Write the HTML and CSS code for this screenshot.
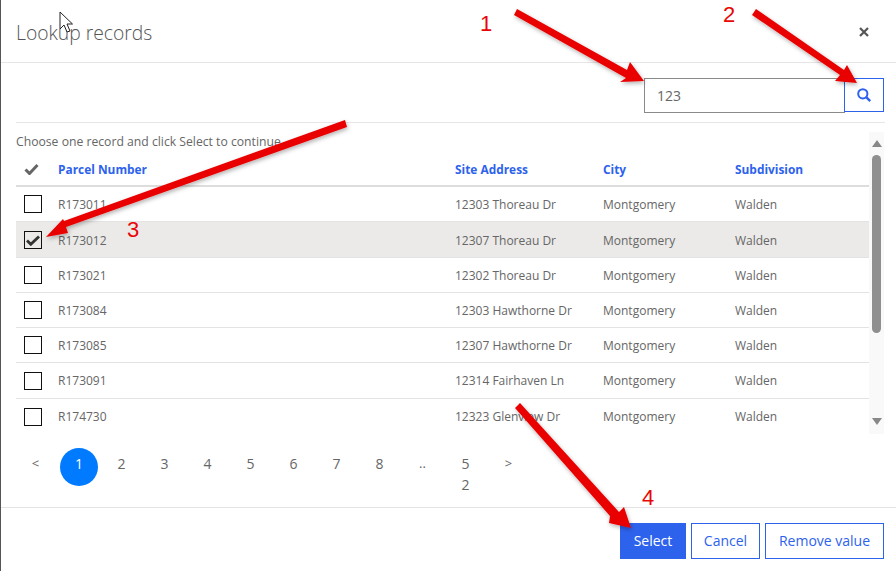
FILE: index.html
```html
<!DOCTYPE html>
<html lang="en">
<head>
<meta charset="utf-8">
<title>Lookup records</title>
<link rel="stylesheet" href="styles.css">
</head>
<body>
<div class="dialog">
  <header class="head">
    <h1 class="title">Lookup records</h1>
    <button class="close" aria-label="Close">
      <svg width="12" height="12" viewBox="0 0 12 12"><path d="M2 2l8 8M10 2l-8 8" stroke="#555" stroke-width="2.2" fill="none"/></svg>
    </button>
  </header>
  <div class="searchrow">
    <div class="searchbox">123</div>
    <button class="searchbtn" aria-label="Search">
      <svg width="16" height="16" viewBox="0 0 16 16"><circle cx="6.8" cy="6.8" r="4.6" stroke="#2d62ed" stroke-width="2" fill="none"/><path d="M10.2 10.2l4 4" stroke="#2d62ed" stroke-width="2.4" fill="none"/></svg>
    </button>
  </div>
  <div class="body">
    <div class="listwrap">
      <p class="hint">Choose one record and click Select to continue</p>
      <div class="row rowhead">
        <div class="c0"><svg width="15" height="12" viewBox="0 0 15 12"><path d="M1.500 6.500l4 4L13.500 2" stroke="#666" stroke-width="3" fill="none"/></svg></div>
        <div class="c1">Parcel Number</div><div class="c2">Site Address</div><div class="c3">City</div><div class="c4">Subdivision</div>
      </div>
      <div class="row"><div class="c0"><span class="box"></span></div><div class="c1">R173011</div><div class="c2">12303 Thoreau Dr</div><div class="c3">Montgomery</div><div class="c4">Walden</div></div>
      <div class="row tall sel"><div class="c0"><span class="box"><svg width="14" height="11" viewBox="0 0 14 11"><path d="M1 5.500l3.800 3.800L13 1.500" stroke="#333" stroke-width="2.800" fill="none"/></svg></span></div><div class="c1">R173012</div><div class="c2">12307 Thoreau Dr</div><div class="c3">Montgomery</div><div class="c4">Walden</div></div>
      <div class="row"><div class="c0"><span class="box"></span></div><div class="c1">R173021</div><div class="c2">12302 Thoreau Dr</div><div class="c3">Montgomery</div><div class="c4">Walden</div></div>
      <div class="row"><div class="c0"><span class="box"></span></div><div class="c1">R173084</div><div class="c2">12303 Hawthorne Dr</div><div class="c3">Montgomery</div><div class="c4">Walden</div></div>
      <div class="row"><div class="c0"><span class="box"></span></div><div class="c1">R173085</div><div class="c2">12307 Hawthorne Dr</div><div class="c3">Montgomery</div><div class="c4">Walden</div></div>
      <div class="row tall"><div class="c0"><span class="box"></span></div><div class="c1">R173091</div><div class="c2">12314 Fairhaven Ln</div><div class="c3">Montgomery</div><div class="c4">Walden</div></div>
      <div class="row last"><div class="c0"><span class="box"></span></div><div class="c1">R174730</div><div class="c2">12323 Glenview Dr</div><div class="c3">Montgomery</div><div class="c4">Walden</div></div>
    </div>
    <div class="scroll">
      <svg class="sarrow" width="10" height="7" viewBox="0 0 10 7"><path d="M5 0l5 7H0z" fill="#888"/></svg>
      <div class="thumb"></div>
      <svg class="sarrow down" width="10" height="7" viewBox="0 0 10 7"><path d="M0 0h10L5 7z" fill="#888"/></svg>
    </div>
  </div>
  <nav class="pager">
    <span class="pg small">&lt;</span><span class="pg cur">1</span><span class="pg">2</span><span class="pg">3</span><span class="pg">4</span><span class="pg">5</span><span class="pg">6</span><span class="pg">7</span><span class="pg">8</span><span class="pg small">..</span><span class="pg wrap">52</span><span class="pg small">&gt;</span>
  </nav>
  <footer class="foot">
    <button class="btn primary">Select</button>
    <button class="btn cancel">Cancel</button>
    <button class="btn remove">Remove value</button>
  </footer>
</div>

<svg class="cursor" width="16" height="24" viewBox="0 0 16 24"><path d="M1 1v17l4-4 3 7 3-1-3-7h5.500z" fill="#fff" stroke="#222" stroke-width="1"/></svg>

<svg class="marks" width="896" height="571" viewBox="0 0 896 571">
  <defs><filter id="sh" x="-10%" y="-10%" width="120%" height="120%"><feDropShadow dx="1" dy="2" stdDeviation="2" flood-color="#000" flood-opacity=".3"/></filter></defs>
  <g fill="#e90606" filter="url(#sh)">
    <polygon points="517,9 514,15 626,78 620,82 644,81 630,62 627,70"/>
    <polygon points="756,9 752,15 840,75 835,81 857,83 847,65 844,70"/>
    <polygon points="345,120 347,127 66,227 68,233 46,237 63,219 64,221"/>
    <polygon points="520,403 515,408 610,516 609,523 631,528 624,507 619,512"/>
  </g>
</svg>
<span class="num n1">1</span><span class="num n2">2</span><span class="num n3">3</span><span class="num n4">4</span>
</body>
</html>
```
FILE: styles.css
```css
* { box-sizing: border-box; }
html, body { margin: 0; padding: 0; }
body {
  width: 896px; height: 571px; overflow: hidden; background: #fff; position: relative;
  font-family: "Open Sans", "Noto Sans", sans-serif; color: #666;
}
.dialog { width: 896px; height: 571px; border-left: 1px solid #555; display: flex; flex-direction: column; }
.head { height: 63px; border-bottom: 1px solid #e6e6e6; display: flex; align-items: center; justify-content: space-between; padding: 2px 26px 0 15px; }
.title { margin: 0; font-size: 19.3px; font-weight: 300; color: #555; }
.close { border: 0; background: none; padding: 0; display: flex; }
.searchrow { height: 60px; margin: 0 11px 0 15px; padding-right: 1px; border-bottom: 1px solid #e6e6e6; display: flex; justify-content: flex-end; align-items: flex-start; padding-top: 15px; }
.searchbox { width: 201px; height: 35px; border: 1px solid #8a8a8a; font-size: 14px; line-height: 33px; padding-left: 12px; color: #666; }
.searchbtn { width: 40px; height: 34px; margin-left: -1px; border: 1px solid #2d62ed; background: #fff; padding: 0; display: flex; align-items: center; justify-content: center; }
.body { display: flex; height: 312px; margin: 0 11px 0 15px; }
.listwrap { width: 853px; overflow: hidden; height: 312px; }
.hint { margin: 0; padding-top: 10px; font-size: 12.2px; line-height: 17px; color: #666; height: 29px; }
.row { display: flex; align-items: center; height: 35px; border-bottom: 1px solid #e3e3e3; font-size: 12px; color: #666; }
.tall { height: 36px; }
.sel { padding-top: 1px; background: #ebeae8; }
.rowhead { height: 35px; border-bottom: 2px solid #ddd; font-weight: 700; font-size: 11.9px; color: #2d62ed; }
.row.last { border-bottom: 0; }
.c0 { width: 42px; padding-left: 8px; display: flex; align-items: center; flex: none; }
.c1 { width: 397px; flex: none; }
.c2 { width: 148px; flex: none; }
.c3 { width: 132px; flex: none; }
.c4 { flex: 1; }
.box { width: 18px; height: 18px; border: 1.5px solid #111; display: flex; align-items: center; justify-content: center; background: #fff; }
.sel .box { background: transparent; }
.scroll { width: 15px; height: 302px; margin-top: 9px; background: #f9f9f9; display: flex; flex-direction: column; align-items: center; padding-top: 8px; }
.thumb { width: 9px; height: 178px; margin-top: 8px; border-radius: 5px; background: #8f8f8f; }
.sarrow { flex: none; }
.sarrow.down { margin-top: auto; margin-bottom: 9px; }
.pager { display: flex; height: 73px; padding: 13px 0 0 13px; border-bottom: 1px solid #e3e3e3; }
.pg { width: 43px; text-align: center; font-size: 14px; line-height: 21px; height: 38px; padding-top: 5px; color: #666; flex: none; }
.small { font-size: 13px; }
.cur { width: 38px; margin: 0 2px 0 3px; border-radius: 50%; background: #007bff; color: #fff; }
.wrap { word-break: break-all; padding-left: 16px; padding-right: 16px; }
.foot { display: flex; justify-content: flex-end; gap: 5px; padding: 15px 12px 0 0; }
.btn { height: 36px; font-family: inherit; font-size: 14px; padding: 0 0 2px; background: #fff; border: 1px solid #2d62ed; color: #2d62ed; }
.primary { width: 66px; background: #2d62ed; color: #fff; }
.cancel { width: 69px; }
.remove { width: 119px; }
.cursor { position: absolute; left: 59px; top: 11px; }
.marks { position: absolute; left: 0; top: 0; pointer-events: none; }
.num { position: absolute; font-family: "Liberation Sans", sans-serif; font-size: 22px; line-height: 26px; color: #e90606; }
.n1 { left: 480px; top: 11px; }
.n2 { left: 723px; top: 2px; }
.n3 { left: 127px; top: 217px; }
.n4 { left: 642px; top: 485px; }
```
